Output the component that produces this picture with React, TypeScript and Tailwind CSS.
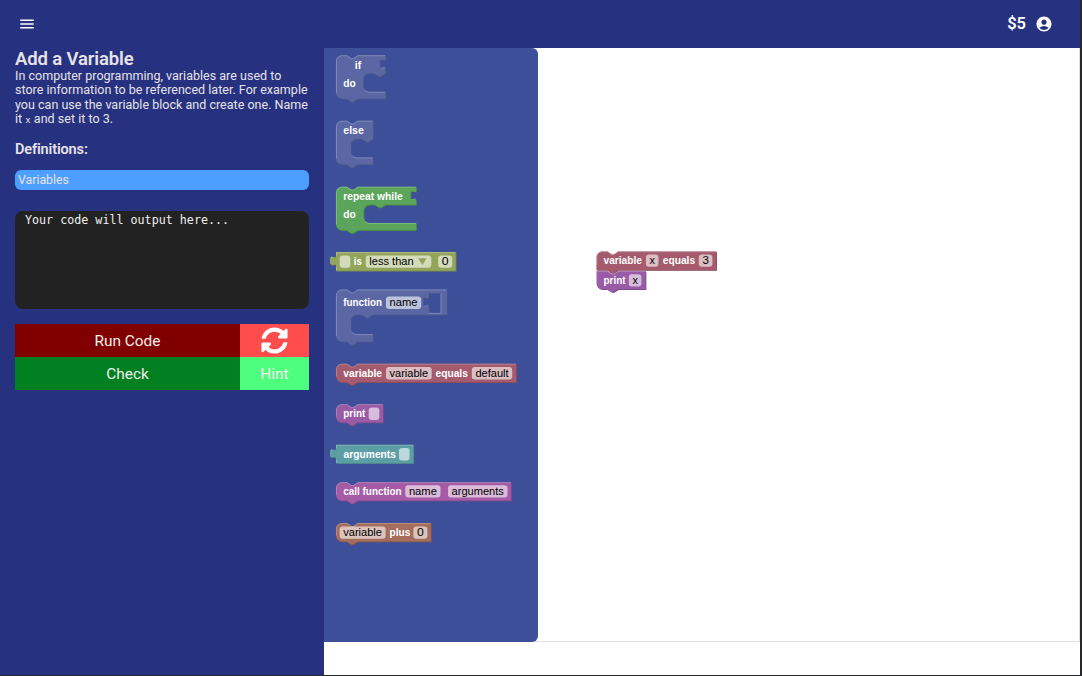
import React from "react";
import { MdMenu, MdAccountCircle } from "react-icons/md";
import { FaSyncAlt } from "react-icons/fa";

// Block geometry is authored in block units and drawn at this zoom.
const S = 0.73;
const NOTCH = `l ${6 * S},${4 * S} ${3 * S},0 ${6 * S},${-4 * S}`;
const NOTCH_BACK = `l ${-6 * S},${4 * S} ${-3 * S},0 ${-6 * S},${-4 * S}`;
const R = 8 * S;
const TAB_DOWN = "c 0,3.4 -2,0.6 -4.4,0.8 q -1.2,0.2 -1.2,1.4 v 5.4 q 0,1.2 1.2,1.3 c 2.4,0.2 4.4,-1.6 4.4,2.05";
const TAB_UP = "c 0,-3.65 -2,-1.85 -4.4,-2.05 q -1.2,-0.1 -1.2,-1.3 v -5.4 q 0,-1.2 1.2,-1.4 c 2.4,-0.2 4.4,2.6 4.4,-0.8";

type Label = { t: string; x: number; y?: number; w: number };
type Field = { t?: string; x: number; y?: number; w: number; tx?: number; tw?: number; arrow?: boolean };
type Mouth = { left: number; top: number; bottom: number; right?: number };

type BlockProps = {
  x: number;
  y: number;
  w: number;
  h: number;
  color: string;
  kind?: "stack" | "value";
  squareTop?: boolean;
  squareBottom?: boolean;
  mouth?: Mouth;
  socket?: boolean;
  hole?: { x: number; y: number; w: number; h: number };
  labels: Label[];
  fields?: Field[];
};

function Block({ x, y, w, h, color, kind = "stack", squareTop, squareBottom, mouth, socket, hole, labels, fields = [] }: BlockProps) {
  const right = mouth?.right ?? w;
  let d = "";
  let light = "";
  if (kind === "value") {
    d = `M 0,0 H ${w} V ${h} H 0 V ${20 * S} ${TAB_UP} Z`;
    light = `M 0.4,${h - 0.5} V ${20 * S} M -5.3,12 V 6.4 q 0,-1.2 1.5,-1.4 M 0.4,${5 * S} V 0.4 H ${w - 0.5}`;
  } else {
    const start = squareTop ? `M 0,0 H ${15 * S}` : `M 0,${R} A ${R},${R} 0 0 1 ${R},0 H ${15 * S}`;
    const side = socket ? `V ${5 * S} ${TAB_DOWN}` : "";
    const inner = mouth
      ? `V ${mouth.top} H ${mouth.left + 30 * S} ${NOTCH_BACK} h ${-7 * S} a ${R},${R} 0 0 0 ${-R},${R} V ${mouth.bottom - R} a ${R},${R} 0 0 0 ${R},${R} H ${right}`
      : "";
    const corner = squareBottom ? "H 0" : `H ${R} a ${R},${R} 0 0 1 ${-R},${-R}`;
    d = `${start} ${NOTCH} H ${w} ${side} ${inner} V ${h} H ${29.5 * S} ${NOTCH_BACK} ${corner} Z`;
    if (hole) {
      d += ` M ${hole.x},${hole.y} V ${hole.y + 5 * S} ${TAB_DOWN} V ${hole.y + hole.h} h ${hole.w} v ${-hole.h} Z`;
    }
    light = squareTop
      ? `M 0.4,${h - R} V 0.4 H ${15 * S} ${NOTCH} H ${w - 0.5}`
      : `M 0.4,${h - R} V ${R} A ${R - 0.4},${R - 0.4} 0 0 1 ${R},0.4 H ${15 * S} ${NOTCH} H ${w - 0.5}`;
    if (mouth) {
      light += ` M ${mouth.left + 1.6},${mouth.bottom - 1.3} A ${R},${R} 0 0 0 ${mouth.left + R},${mouth.bottom + 0.4} H ${right - 0.5}`;
    }
    if (socket) light += ` M ${w - 4.5},${18 * S} l 4,-1.2`;
    if (hole) light += ` M ${hole.x},${hole.y + hole.h + 0.4} h ${hole.w + 0.4} v ${-hole.h} M ${hole.x - 4.5},${hole.y + 18 * S} l 4,-1.2`;
  }
  return (
    <g transform={`translate(${x},${y})`}>
      <path d={d} transform="translate(0.73,0.73)" fill={color} fillRule="evenodd" />
      <path d={d} transform="translate(0.73,0.73)" fill="#000" opacity={0.2} fillRule="evenodd" />
      <path d={d} fill={color} fillRule="evenodd" />
      <path d={light} fill="none" stroke="#fff" strokeOpacity={0.3} strokeWidth={0.8} />
      {labels.map((l, i) => (
        <text key={i} x={l.x} y={l.y ?? 13.1} textLength={l.w} lengthAdjust="spacingAndGlyphs" className="fill-white text-[10.7px] font-bold">
          {l.t}
        </text>
      ))}
      {fields.map((f, i) => (
        <g key={i} transform={`translate(0,${f.y ?? 0})`}>
          <rect x={f.x} y={3.4} width={f.w} height={12.3} rx={3} fill="#fff" fillOpacity={0.6} />
          {f.t && (
            <text x={f.tx ?? f.x + 3.6} y={13.1} textLength={f.tw ?? f.w - 7.2} lengthAdjust="spacingAndGlyphs" className="fill-black text-[10.7px]">
              {f.t}
            </text>
          )}
          {f.arrow && <path d={`M ${f.x + f.w - 13},6.1 h 8.2 l -4.1,7 z`} fill={color} />}
        </g>
      ))}
    </g>
  );
}

const toolbox: BlockProps[] = [
  { x: 12, y: 7.3, w: 49.6, h: 43.5, color: "#5b67a5", socket: true, mouth: { left: 27.3, top: 18.2, bottom: 36.5 }, labels: [{ t: "if", x: 18.8, y: 13.8, w: 6.5 }, { t: "do", x: 7.3, y: 31.9, w: 12.5 }] },
  { x: 12, y: 72.7, w: 37.2, h: 43.8, color: "#5b67a5", mouth: { left: 15, top: 18.3, bottom: 36.8 }, labels: [{ t: "else", x: 7.3, w: 20.5 }] },
  { x: 12, y: 138.7, w: 80.2, h: 43.6, color: "#5ba55b", socket: true, mouth: { left: 27.6, top: 18, bottom: 36.3 }, labels: [{ t: "repeat while", x: 7.3, w: 59.5 }, { t: "do", x: 7.3, y: 31.1, w: 12.5 }] },
  { x: 12, y: 204.1, w: 119.7, h: 18.7, color: "#93a55b", kind: "value", labels: [{ t: "is", x: 17.8, w: 8 }], fields: [{ x: 3.7, w: 10.6 }, { t: "less than", x: 29.7, w: 65.6, tx: 33.3, tw: 44.3, arrow: true }, { t: "0", x: 102.2, w: 14 }] },
  { x: 12, y: 241.5, w: 111, h: 52.3, color: "#5b67a5", mouth: { left: 15, top: 25.3, bottom: 44.7, right: 37.2 }, hole: { x: 92.9, y: 3.7, w: 11.7, h: 19.7 }, labels: [{ t: "function", x: 7.3, y: 16.6, w: 38.7 }], fields: [{ t: "name", x: 50, y: 3.7, w: 35.2 }] },
  { x: 12, y: 315.7, w: 180.2, h: 18.5, color: "#a55b6d", labels: [{ t: "variable", x: 7.3, w: 38.7 }, { t: "equals", x: 99.5, w: 32.4 }], fields: [{ t: "variable", x: 50, w: 45.7 }, { t: "default", x: 135.8, w: 40.4 }] },
  { x: 12, y: 356.2, w: 47, h: 18.4, color: "#995ba5", labels: [{ t: "print", x: 7.3, w: 22 }], fields: [{ x: 32.7, w: 10.6 }] },
  { x: 12, y: 396.7, w: 77.4, h: 18.5, color: "#5b9fa5", kind: "value", labels: [{ t: "arguments", x: 7.5, w: 52.5 }], fields: [{ x: 63, w: 10.6 }] },
  { x: 12, y: 434.2, w: 175, h: 18.4, color: "#a55ba5", labels: [{ t: "call function", x: 7.3, y: 12.8, w: 58.3 }], fields: [{ t: "name", x: 69.3, y: -0.3, w: 35.2 }, { t: "arguments", x: 112, y: -0.3, w: 59.5 }] },
  { x: 12, y: 475, w: 94.9, h: 18.4, color: "#a56d5b", labels: [{ t: "plus", x: 53.5, w: 20.8 }], fields: [{ t: "variable", x: 3.6, w: 46 }, { t: "0", x: 77.4, w: 14 }] },
];

const program: BlockProps[] = [
  { x: 58.4, y: 203.3, w: 119.8, h: 18.8, color: "#a55b6d", squareBottom: true, labels: [{ t: "variable", x: 7.1, y: 12.7, w: 38.5 }, { t: "equals", x: 66.3, y: 12.7, w: 32.4 }], fields: [{ t: "x", x: 49.5, y: -0.2, w: 12.6 }, { t: "3", x: 102.4, y: -0.2, w: 13.6 }] },
  { x: 58.4, y: 222.9, w: 49.2, h: 18.3, color: "#995ba5", squareTop: true, labels: [{ t: "print", x: 7.1, w: 22 }], fields: [{ t: "x", x: 32.4, w: 12.6 }] },
];

const paragraph = [
  "In computer programming, variables are used to",
  "store information to be referenced later. For example",
  "you can use the variable block and create one. Name",
];

export default function App() {
  return (
    <div className="flex h-[676px] w-[1082px] flex-col overflow-hidden border-r-2 border-b border-[#25282b] bg-white font-['Roboto',sans-serif]">
      <header className="flex h-12 shrink-0 items-center justify-between bg-[#26317f] pr-[27px] pl-[18px] text-white">
        <MdMenu className="size-[18px]" />
        <div className="flex items-center gap-[9px]">
          <span className="text-[16.5px] leading-none font-semibold">$5</span>
          <MdAccountCircle className="size-[18px]" />
        </div>
      </header>
      <div className="flex min-h-0 flex-1">
        <aside className="flex w-[324px] shrink-0 flex-col bg-[#26317f] px-[15px] text-[#e6e3e8]">
          <h1 className="mt-px h-5 text-[18.5px] leading-[21px] font-semibold tracking-[-0.13px] whitespace-nowrap">Add a Variable</h1>
          <div className="text-[12.5px] leading-[14.4px] font-[450] tracking-[0.02px] whitespace-nowrap">
            {paragraph.map((line) => (
              <p key={line}>{line}</p>
            ))}
            <p>
              it <code className="font-['DejaVu_Sans_Mono',monospace] text-[9px]">x</code> and set it to 3.
            </p>
          </div>
          <h2 className="mt-[13px] h-[18px] text-[14.5px] leading-[18px] font-semibold tracking-[-0.14px]">Definitions:</h2>
          <div className="mt-[11.5px] h-5 shrink-0 rounded-[6px] bg-[#4d9fff] pl-[3px] text-[12.3px] leading-[21px] font-[450]">Variables</div>
          <div className="mt-[20.5px] h-[98px] shrink-0 rounded-[8px] bg-[#222] pl-[10px] font-['DejaVu_Sans_Mono',monospace] text-[11.7px] leading-[18px] text-[#f0f0f0]">
            Your code will output here...
          </div>
          <div className="mt-[15px] grid grid-cols-[225px_69px] grid-rows-[33px_33px] text-center text-[15.4px] leading-[34px] font-[450] text-[#f5eeee]">
            <button className="bg-[#800000]">Run Code</button>
            <button className="flex items-center justify-center bg-[#ff4d4d] text-white">
              <FaSyncAlt className="size-[27px]" />
            </button>
            <button className="bg-[#008020]">Check</button>
            <button className="bg-[#4dff7c]">Hint</button>
          </div>
        </aside>
        <main className="flex h-[594px] min-w-0 flex-1 border-r border-b border-[#e2e2e2] font-['Liberation_Sans',sans-serif]">
          <section className="h-[594px] w-[213.5px] shrink-0 rounded-r-[6px] bg-[#3c4f98]">
            <svg width="213" height="594">
              {toolbox.map((b, i) => (
                <Block key={i} {...b} />
              ))}
            </svg>
          </section>
          <section className="min-w-0 flex-1">
            <svg width="540" height="592">
              {program.map((b, i) => (
                <Block key={i} {...b} />
              ))}
            </svg>
          </section>
        </main>
      </div>
    </div>
  );
}
